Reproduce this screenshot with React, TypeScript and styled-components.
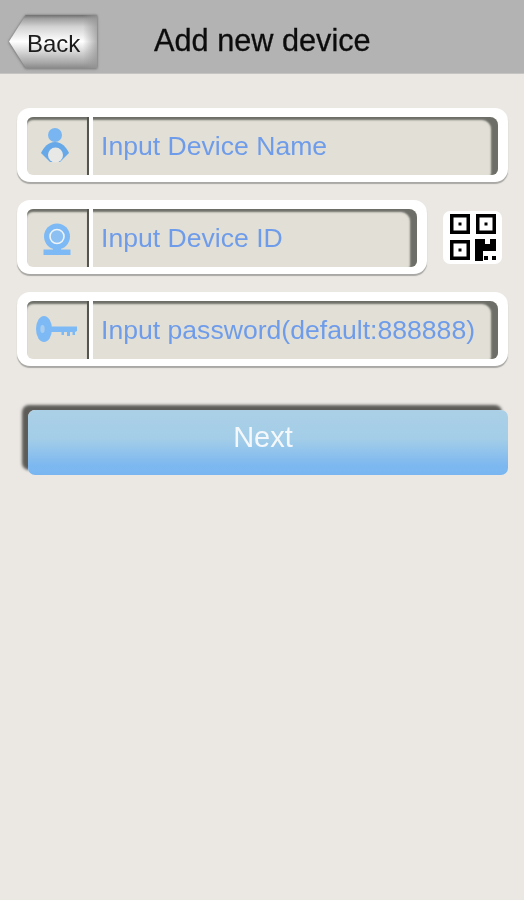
import * as React from "react";
import styled, { createGlobalStyle } from "styled-components";

const GlobalStyle = createGlobalStyle`
  html, body {
    margin: 0;
    padding: 0;
    background: #ebe8e4;
    font-family: "Liberation Sans", Arial, sans-serif;
  }
`;

// the reference is a soft, upscaled phone capture
const Page = styled.div`
  width: 524px;
  height: 900px;
  overflow: hidden;
  background: #ebe8e4;
  filter: blur(0.5px);
`;

const Header = styled.header`
  height: 74px;
  box-sizing: border-box;
  display: flex;
  align-items: center;
  padding: 0 0 0 9px;
  background: #b3b3b3;
  border-bottom: 1px solid #c4c4c2;
`;

const BackWrap = styled.div`
  width: 88px;
  height: 53px;
  align-self: flex-start;
  margin-top: 15px;
  filter: drop-shadow(0 0 1px #77777a) drop-shadow(0 1px 1px #8a8a8a);
`;

const BackButton = styled.div`
  width: 100%;
  height: 100%;
  box-sizing: border-box;
  padding: 4px 0 0 18px;
  display: flex;
  align-items: center;
  font-size: 24px;
  color: #1c1c1c;
  clip-path: polygon(19% 0, 100% 0, 100% 100%, 19% 100%, 0 50%);
  background:
    linear-gradient(90deg, rgba(255, 255, 255, 0) 84%, rgba(150, 150, 150, 0.75) 100%),
    linear-gradient(180deg, #6f6f6f 0, #a0a0a0 7%, #d2d2d2 22%, #ffffff 50%, #e6e6e6 62%, #a8a8a8 90%, #8a8a8a 100%);
`;

const Title = styled.h1`
  margin: 8px 0 0 57px;
  font-size: 30.7px;
  font-weight: normal;
  color: #0c0c0c;
  -webkit-text-stroke: 0.3px #0c0c0c;
`;

const Form = styled.main`
  display: flex;
  flex-direction: column;
  padding: 34px 16px 0 17px;
`;

const Row = styled.div`
  display: flex;
  align-items: center;
  margin-bottom: 18px;
`;

const InputFrame = styled.div<{ $width: number }>`
  width: ${props => props.$width}px;
  height: 74px;
  box-sizing: border-box;
  display: flex;
  padding: 9px 10px 7px 10px;
  background: #ffffff;
  border-radius: 13px;
  box-shadow: 0 2px 1px #a9a8a4;
`;

const IconCell = styled.div`
  width: 60px;
  flex: none;
  display: flex;
  align-items: center;
  justify-content: center;
  background: #e2e0d6;
  border-radius: 6px 0 0 6px;
  box-shadow: inset 0 4px 2px -1px #6e6e69;
`;

const Divider = styled.div`
  width: 6px;
  flex: none;
  background: linear-gradient(90deg, #55554f 0, #55554f 40%, #ffffff 40%);
`;

const Field = styled.div`
  flex: 1;
  display: flex;
  align-items: center;
  padding: 0 0 0 8px;
  font-size: 26.6px;
  color: #6f9cea;
  background: #e2e0d6;
  border-radius: 0 8px 6px 0;
  box-shadow: inset -8px 4px 2px -1px #6e6e69;
  white-space: nowrap;
`;

const QrBox = styled.div`
  width: 59px;
  height: 53px;
  margin-left: 16px;
  display: flex;
  align-items: center;
  justify-content: center;
  background: #ffffff;
  border-radius: 7px;
`;

const NextButton = styled.div`
  width: 480px;
  height: 65px;
  margin: 26px 0 0 11px;
  padding: 0 10px 10px 0;
  box-sizing: border-box;
  display: flex;
  align-items: center;
  justify-content: center;
  font-size: 29px;
  color: #f4f8fb;
  border-radius: 7px;
  background: linear-gradient(180deg, #abd0e6 0, #a3cde8 45%, #7db8f0 85%, #79b6f1 100%);
  box-shadow: -6px -5px 3px #5d5c58;
`;

function PersonIcon() {
  return (
    <svg width="34" height="36" viewBox="0 0 34 36">
      <circle cx="15" cy="7" r="7" fill="#79b5f0" />
      <path d="M15 14 C22 14 26 19 29 25 L20 34 H10 L1 25 C4 19 8 14 15 14 Z" fill="#67a8e8" />
      <circle cx="15.5" cy="27" r="7.5" fill="#e8e9e6" />
    </svg>
  );
}

function WebcamIcon() {
  return (
    <svg width="30" height="34" viewBox="0 0 30 34">
      <circle cx="15" cy="15.5" r="13" fill="#7db9f5" />
      <circle cx="15" cy="15.5" r="7" fill="#8cc0f2" stroke="#eef3f6" strokeWidth="1.6" />
      <rect x="11" y="27" width="8" height="3" fill="#7db9f5" />
      <rect x="1.5" y="28.5" width="27" height="5.5" fill="#7db9f5" />
    </svg>
  );
}

function KeyIcon() {
  return (
    <svg width="42" height="28" viewBox="0 0 42 28">
      <ellipse cx="8" cy="13" rx="8" ry="13" fill="#7db9f5" />
      <ellipse cx="6.5" cy="13" rx="2.2" ry="4" fill="#a9cdee" />
      <path d="M13 10.5 H41 V15 L39 16 V19 H36.5 V16 H34 V20 H31 V16 H28 V19 H25.5 V16 H13 Z" fill="#7db9f5" />
    </svg>
  );
}

function QrIcon() {
  const finder = (x: number, y: number) => (
    <g>
      <rect x={x} y={y} width="20" height="20" fill="#000" />
      <rect x={x + 3.5} y={y + 3.5} width="13" height="13" fill="#fff" />
      <rect x={x + 8.5} y={y + 8.5} width="3" height="3" fill="#000" />
    </g>
  );
  return (
    <svg width="46" height="47" viewBox="0 0 46 47">
      {finder(0, 0)}
      {finder(26, 0)}
      {finder(0, 26)}
      <path d="M25 25 H35 V30 H40 V25 H46 V37 H33 V47 H25 Z" fill="#000" />
      <rect x="34" y="42" width="4" height="4" fill="#000" />
      <rect x="42" y="42" width="4" height="4" fill="#000" />
    </svg>
  );
}

export default function App() {
  return (
    <Page>
      <GlobalStyle />
      <Header>
        <BackWrap>
          <BackButton>Back</BackButton>
        </BackWrap>
        <Title>Add new device</Title>
      </Header>
      <Form>
        <Row>
          <InputFrame $width={491}>
            <IconCell>
              <PersonIcon />
            </IconCell>
            <Divider />
            <Field>Input Device Name</Field>
          </InputFrame>
        </Row>
        <Row>
          <InputFrame $width={410}>
            <IconCell>
              <WebcamIcon />
            </IconCell>
            <Divider />
            <Field>Input Device ID</Field>
          </InputFrame>
          <QrBox>
            <QrIcon />
          </QrBox>
        </Row>
        <Row>
          <InputFrame $width={491}>
            <IconCell>
              <KeyIcon />
            </IconCell>
            <Divider />
            <Field>Input password(default:888888)</Field>
          </InputFrame>
        </Row>
        <NextButton>Next</NextButton>
      </Form>
    </Page>
  );
}
